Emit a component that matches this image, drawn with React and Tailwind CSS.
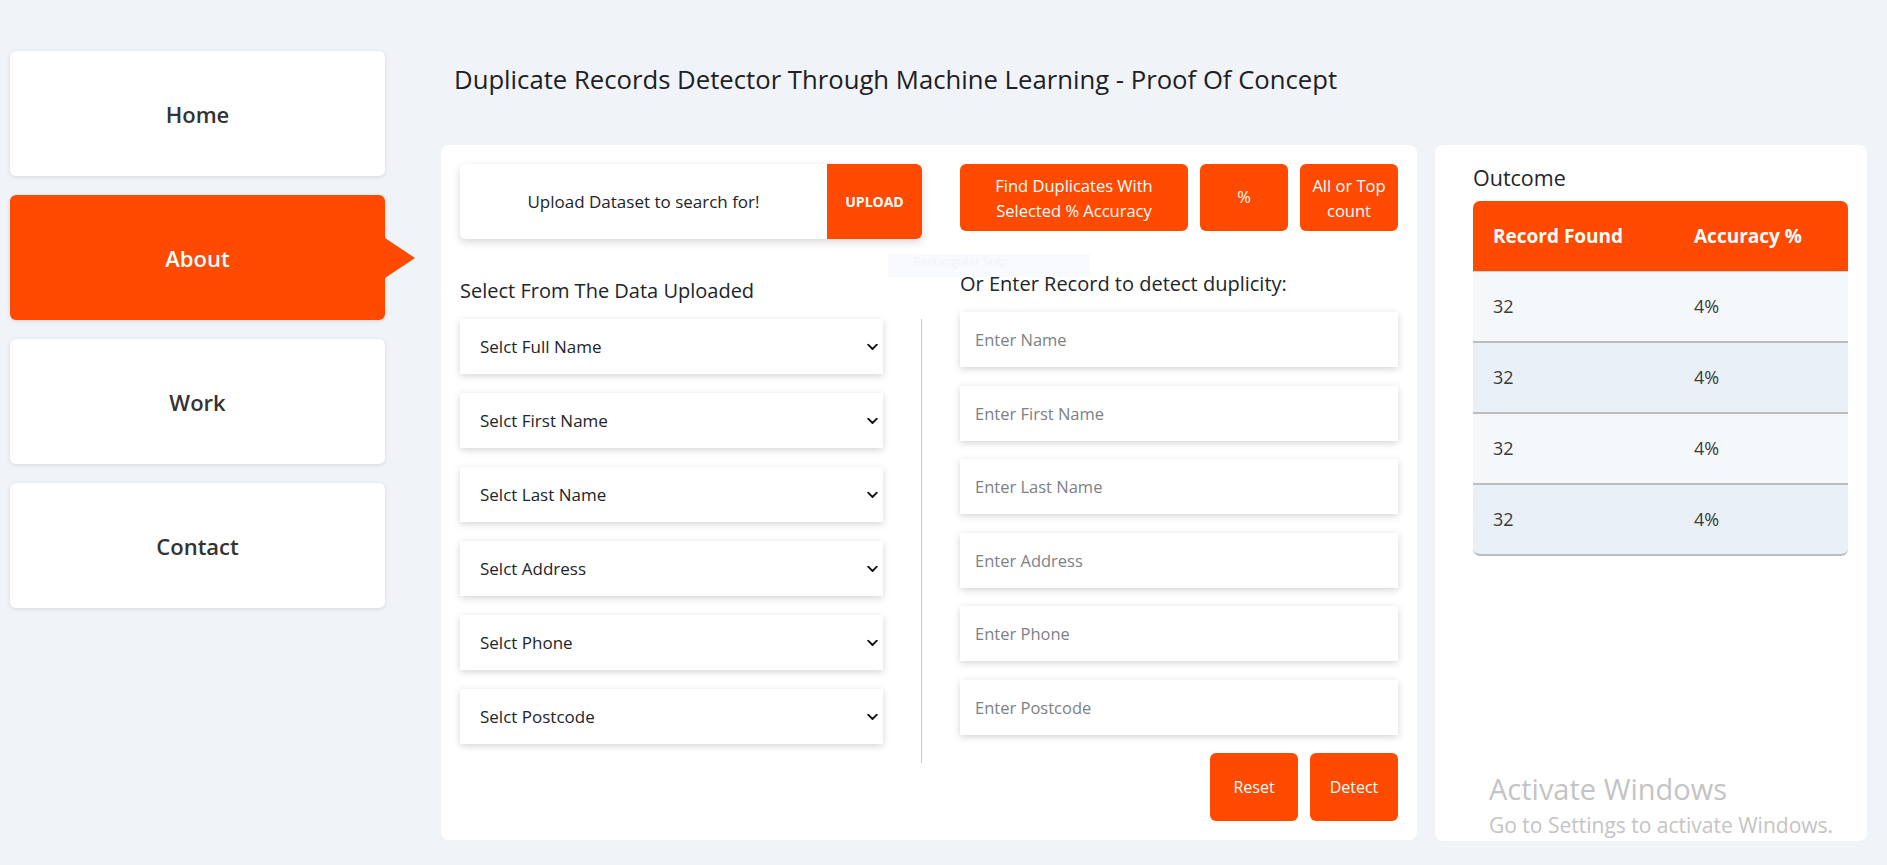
import { useState } from 'react';

const nav = ['Home', 'About', 'Work', 'Contact'];
const selects = ['Selct Full Name', 'Selct First Name', 'Selct Last Name', 'Selct Address', 'Selct Phone', 'Selct Postcode'];
const inputs = ['Enter Name', 'Enter First Name', 'Enter Last Name', 'Enter Address', 'Enter Phone', 'Enter Postcode'];
const rows = [
  { found: 32, acc: '4%' },
  { found: 32, acc: '4%' },
  { found: 32, acc: '4%' },
  { found: 32, acc: '4%' },
];

const font = { fontFamily: '"Open Sans", "Noto Sans", Arial, sans-serif' };

function Chevron() {
  return (
    <svg width="11" height="7" viewBox="0 0 11 7" className="pointer-events-none absolute right-[5px] top-1/2 -translate-y-1/2">
      <polyline points="1.2,1.2 5.5,5.5 9.8,1.2" fill="none" stroke="#111" strokeWidth="1.8" strokeLinecap="round" strokeLinejoin="round" />
    </svg>
  );
}

export default function App() {
  const [active, setActive] = useState('About');
  const [form, setForm] = useState({});
  const set = (k, v) => setForm(p => ({ ...p, [k]: v }));

  const btn = "bg-[#ff4a00] text-white rounded-[6px] flex items-center justify-center text-center";
  const fieldShadow = "shadow-[0_2px_7px_rgba(0,0,0,0.17)]";

  return (
    <div className="relative min-h-[865px] w-full bg-[#f0f4f8] flex text-[#212529]" style={font}>
      {/* snipping tool ghost, sits behind the page text */}
      <div className="absolute left-[888px] top-[254px] w-[202px] h-[23px] bg-[#f8fafd] z-10">
        <div className="pl-[25px] pt-[1px] text-[12px] leading-[14px] text-[#f0f3f8]">Rectangular Snip</div>
      </div>

      {/* sidebar */}
      <div className="pl-[10px] pt-[51px] flex flex-col gap-[19px] w-[385px] shrink-0">
        {nav.map(n => (
          <button
            key={n}
            onClick={() => setActive(n)}
            className={`relative h-[125px] w-[375px] pt-[2px] rounded-[6px] shadow-[0_1px_4px_rgba(0,0,0,0.12)] text-[22px] font-semibold ${active === n ? 'bg-[#ff4a00] text-white' : 'bg-white text-[#333]'}`}
          >
            {n}
            {active === n && (
              <span className="absolute right-[-30px] top-1/2 -translate-y-1/2 w-0 h-0 border-l-[30px] border-l-[#ff4a00] border-y-[20px] border-y-transparent" />
            )}
          </button>
        ))}
      </div>

      {/* main */}
      <div className="ml-[56px] pt-[63px] flex flex-col">
        <h4 className="pl-[13px] h-[34px] leading-[34px] text-[25.7px] font-normal text-[#1d2024] mb-[48px] whitespace-nowrap">
          Duplicate Records Detector Through Machine Learning - Proof Of Concept
        </h4>

        <div className="flex gap-[18px]">
          {/* form card */}
          <div className="w-[976px] h-[695px] bg-white rounded-[8px] p-[19px] flex gap-[38px]">
            {/* left column */}
            <div className="w-[462px] flex flex-col">
              <div className="h-[75px] flex rounded-[6px] bg-white shadow-[0_3px_8px_rgba(0,0,0,0.16)] overflow-hidden">
                <div className="flex-1 flex items-center justify-center text-[17px] text-[#212529]">Upload Dataset to search for!</div>
                <button className="w-[95px] bg-[#ff4a00] text-white text-[14px] font-bold">UPLOAD</button>
              </div>
              <h5 className="mt-[39.5px] h-[24px] leading-[24px] text-[20px] font-normal whitespace-nowrap">Select From The Data Uploaded</h5>
              <div className="mt-[16.5px] border-r border-[#c8c8c8] pr-[38px] pb-[19px] flex flex-col gap-[19px]">
                {selects.map(s => (
                  <div key={s} className="relative">
                    <select
                      value={form[s] || ''}
                      onChange={e => set(s, e.target.value)}
                      className={`appearance-none w-full h-[55px] bg-white pl-[20px] pr-[30px] text-[17px] text-[#212529] outline-none ${fieldShadow}`}
                      style={font}
                    >
                      <option value="">{s}</option>
                    </select>
                    <Chevron />
                  </div>
                ))}
              </div>
            </div>

            {/* right column */}
            <div className="w-[438px] flex flex-col">
              <div className="flex gap-[12px] h-[68px]">
                <button className={`${btn} w-[228px] text-[16.5px] leading-[25px]`}>Find Duplicates With<br />Selected % Accuracy</button>
                <button className={`${btn} w-[88px] text-[16.5px]`}>%</button>
                <button className={`${btn} w-[98px] text-[16.5px] leading-[25px]`}>All or Top<br />count</button>
              </div>
              <h5 className="relative z-20 mt-[41px] h-[24px] leading-[24px] text-[20px] font-normal whitespace-nowrap">Or Enter Record to detect duplicity:</h5>
              <div className="mt-[16px] flex flex-col gap-[18.6px]">
                {inputs.map(p => (
                  <input
                    key={p}
                    placeholder={p}
                    value={form[p] || ''}
                    onChange={e => set(p, e.target.value)}
                    className={`h-[55px] w-full bg-white px-[15px] text-[16.5px] text-[#212529] placeholder:text-[#7d8185] outline-none ${fieldShadow}`}
                    style={font}
                  />
                ))}
              </div>
              <div className="mt-[18px] flex justify-end gap-[12px]">
                <button className={`${btn} w-[88px] h-[68px] text-[16px]`} onClick={() => setForm({})}>Reset</button>
                <button className={`${btn} w-[88px] h-[68px] text-[16px]`}>Detect</button>
              </div>
            </div>
          </div>

          {/* outcome card */}
          <div className="w-[432px] h-[696px] bg-white rounded-[8px] pl-[38px] pr-[19px] pt-[19px]">
            <h5 className="h-[28px] leading-[28px] text-[21.5px] font-normal">Outcome</h5>
            <table className="mt-[9px] w-[375px] border-separate border-spacing-0 text-[18px]">
              <thead>
                <tr className="h-[71px] text-white text-[19px]">
                  <th className="bg-[#ff4a00] w-[201px] pl-[20px] text-left font-bold rounded-tl-[7px] border-b border-[#d0d0d0]">Record Found</th>
                  <th className="bg-[#ff4a00] pl-[20px] text-left font-bold rounded-tr-[7px] border-b border-[#d0d0d0]">Accuracy %</th>
                </tr>
              </thead>
              <tbody>
                {rows.map((r, i) => {
                  const bg = i % 2 === 0 ? 'bg-[#f4f8fb]' : 'bg-[#e9f0f7]';
                  const last = i === rows.length - 1;
                  return (
                    <tr key={i} className="h-[71px] text-[#3a3a3a]">
                      <td className={`${bg} pl-[20px] border-b-2 border-[#bdbdbd] ${last ? 'rounded-bl-[7px]' : ''}`}>{r.found}</td>
                      <td className={`${bg} pl-[20px] border-b-2 border-[#bdbdbd] ${last ? 'rounded-br-[7px]' : ''}`}>{r.acc}</td>
                    </tr>
                  );
                })}
              </tbody>
            </table>
          </div>
        </div>
      </div>

      {/* windows watermark */}
      <div className="absolute left-[1489px] top-[770px] pointer-events-none text-[#c4c4c4]">
        <div className="text-[29px] leading-[38px] whitespace-nowrap">Activate Windows</div>
        <div className="mt-[3px] text-[21px] leading-[28px] whitespace-nowrap">Go to Settings to activate Windows.</div>
      </div>
    </div>
  );
}
